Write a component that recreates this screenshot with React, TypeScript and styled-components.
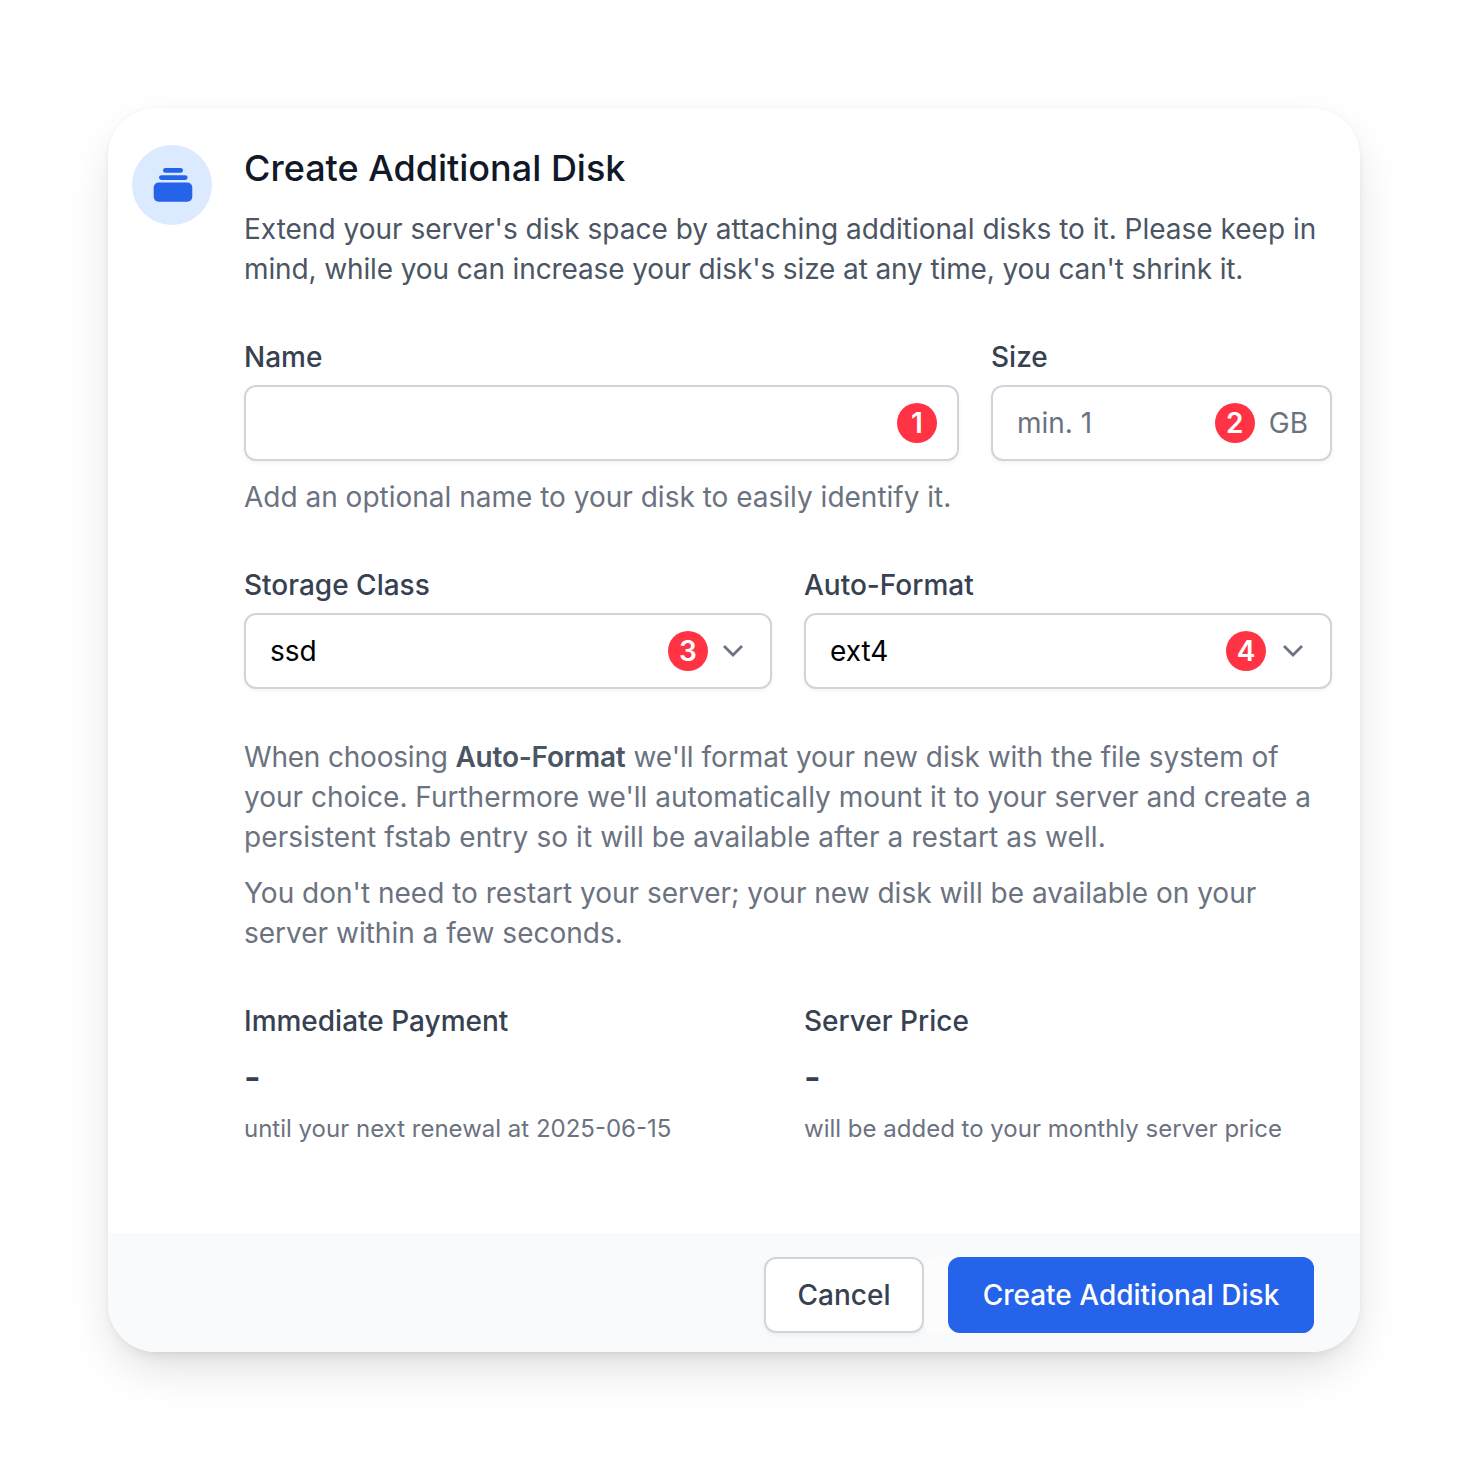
import styled, { createGlobalStyle } from 'styled-components';

const GlobalStyle = createGlobalStyle`
  html, body {
    margin: 0;
    padding: 0;
    background: #ffffff;
  }

  body {
    font-family: 'Inter', sans-serif;
    -webkit-font-smoothing: antialiased;
  }
`;

const Page = styled.div`
  width: 1468px;
  height: 1460px;
  padding: 108px;
  box-sizing: border-box;
`;

const Card = styled.div`
  width: 1252px;
  height: 1244px;
  display: flex;
  flex-direction: column;
  border-radius: 48px;
  overflow: hidden;
  background: #ffffff;
  box-shadow: 0 20px 50px -10px rgba(0, 0, 0, 0.16), 0 8px 16px -8px rgba(0, 0, 0, 0.1),
    0 0 4px rgba(0, 0, 0, 0.04);
`;

const Body = styled.div`
  flex: 1;
  display: flex;
  gap: 32px;
  padding: 37px 28px 0 24px;
`;

const IconCircle = styled.div`
  width: 80px;
  height: 80px;
  flex: none;
  display: flex;
  align-items: center;
  justify-content: center;
  border-radius: 50%;
  background: #dbeafe;
`;

const Content = styled.div`
  flex: 1;
  min-width: 0;
`;

const Title = styled.h2`
  margin: -1px 0 0;
  font-size: 36px;
  line-height: 48px;
  font-weight: 500;
  color: #111827;
`;

const Lead = styled.p`
  margin: 17px 0 0;
  font-size: 28px;
  line-height: 40px;
  color: #4b5563;
`;

const Tracked = styled.span<{ $spacing: number }>`
  letter-spacing: ${(p) => p.$spacing}px;
`;

const Row = styled.div<{ $columns: string; $top: number }>`
  display: grid;
  grid-template-columns: ${(p) => p.$columns};
  column-gap: 32px;
  margin-top: ${(p) => p.$top}px;
`;

const Label = styled.div`
  font-size: 28px;
  line-height: 40px;
  font-weight: 500;
  color: #374151;
`;

const Field = styled.div`
  height: 76px;
  margin-top: 8px;
  box-sizing: border-box;
  display: flex;
  align-items: center;
  padding: 0 24px;
  background: #ffffff;
  border: 2px solid #d1d5db;
  border-radius: 12px;
  box-shadow: 0 2px 4px rgba(0, 0, 0, 0.05);
  font-size: 28px;
`;

const FieldText = styled.span<{ $muted?: boolean }>`
  flex: 1;
  color: ${(p) => (p.$muted ? '#6b7280' : '#000000')};
`;

const Unit = styled.span`
  margin-left: 14px;
  margin-right: -2px;
  color: #6b7280;
`;

const Chevron = styled.svg<{ $gap: number }>`
  margin-left: ${(p) => p.$gap}px;
  margin-right: 1px;
  flex: none;
`;

const Badge = styled.span`
  width: 40px;
  height: 40px;
  flex: none;
  display: flex;
  align-items: center;
  justify-content: center;
  border-radius: 50%;
  background: #ff3344;
  color: #ffffff;
  font-size: 28px;
  font-weight: 600;
`;

const NameBadge = styled(Badge)`
  margin-right: -4px;
`;

const Hint = styled.p`
  margin: 16px 0 0;
  font-size: 28px;
  line-height: 40px;
  color: #6b7280;
`;

const Notes = styled.div`
  margin-top: 48px;
`;

const Note = styled.p`
  margin: 16px 0 0;
  font-size: 28px;
  line-height: 40px;
  color: #6b7280;

  &:first-child {
    margin-top: 0;
  }

  strong {
    font-weight: 600;
    color: #4b5563;
  }
`;

const Price = styled.div`
  margin-top: 16px;
  font-size: 36px;
  line-height: 40px;
  font-weight: 600;
  color: #374151;
`;

const Small = styled.div`
  margin-top: 12px;
  font-size: 24px;
  line-height: 40px;
  color: #6b7280;
`;

const Footer = styled.div`
  height: 119px;
  flex: none;
  box-sizing: border-box;
  display: flex;
  justify-content: flex-end;
  gap: 24px;
  padding: 24px 46px 0 0;
  background: #f9fafb;
`;

const CancelButton = styled.button`
  width: 160px;
  height: 76px;
  box-sizing: border-box;
  padding: 0;
  background: #ffffff;
  border: 2px solid #d1d5db;
  border-radius: 12px;
  box-shadow: 0 2px 4px rgba(0, 0, 0, 0.05);
  font-family: inherit;
  font-size: 28px;
  font-weight: 500;
  color: #374151;
`;

const SubmitButton = styled.button`
  position: relative;
  width: 366px;
  height: 76px;
  padding: 0;
  background: #2563eb;
  border: 0;
  border-radius: 12px;
  font-family: inherit;
  font-size: 28px;
  font-weight: 500;
  color: #ffffff;

  &::before {
    content: '';
    position: absolute;
    z-index: 0;
    left: -24px;
    top: 0;
    bottom: -1px;
    width: 60px;
    border-radius: 12px;
    background: #fcfcfd;
  }
`;

const SubmitFill = styled.span`
  position: absolute;
  inset: 0;
  display: flex;
  align-items: center;
  justify-content: center;
  border-radius: 12px;
  background: #2563eb;
`;

function DiskIcon() {
  return (
    <svg width="42" height="34" viewBox="0 0 42 34" fill="#2563eb">
      <rect x="12" y="0" width="20" height="4.8" rx="2.4" />
      <rect x="8" y="7.2" width="28.6" height="4.8" rx="2.4" />
      <rect x="2.7" y="14.6" width="38.6" height="19.2" rx="5" />
    </svg>
  );
}

function SelectChevron({ gap }: { gap: number }) {
  return (
    <Chevron $gap={gap} width="24" height="24" viewBox="0 0 24 24" fill="none">
      <path d="M3 7l9 9 9-9" stroke="#6b7280" strokeWidth="2.8" />
    </Chevron>
  );
}

export default function App() {
  return (
    <Page>
      <GlobalStyle />
      <Card>
        <Body>
          <IconCircle>
            <DiskIcon />
          </IconCircle>
          <Content>
            <Title>Create Additional Disk</Title>
            <Lead>
              Extend your server's disk space by attaching additional disks to it. Please keep in{' '}
              <Tracked $spacing={-0.12}>
                mind, while you can increase your disk's size at any time, you can't shrink it.
              </Tracked>
            </Lead>

            <Row $columns="715px 341px" $top={48}>
              <div>
                <Label>Name</Label>
                <Field>
                  <FieldText />
                  <NameBadge>1</NameBadge>
                </Field>
              </div>
              <div>
                <Label>Size</Label>
                <Field>
                  <FieldText $muted>min. 1</FieldText>
                  <Badge>2</Badge>
                  <Unit>GB</Unit>
                </Field>
              </div>
            </Row>
            <Hint>Add an optional name to your disk to easily identify it.</Hint>

            <Row $columns="528px 528px" $top={48}>
              <div>
                <Label>Storage Class</Label>
                <Field>
                  <FieldText>ssd</FieldText>
                  <Badge>3</Badge>
                  <SelectChevron gap={13} />
                </Field>
              </div>
              <div>
                <Label>Auto-Format</Label>
                <Field>
                  <FieldText>ext4</FieldText>
                  <Badge>4</Badge>
                  <SelectChevron gap={15} />
                </Field>
              </div>
            </Row>

            <Notes>
              <Note>
                <Tracked $spacing={-0.2}>
                  When choosing <strong>Auto-Format</strong>
                </Tracked>{' '}
                <Tracked $spacing={-0.02}>we'll format your new disk with the file system of</Tracked>{' '}
                your choice. Furthermore we'll automatically mount it to your server and create a{' '}
                <Tracked $spacing={0.09}>
                  persistent fstab entry so it will be available after a restart as well.
                </Tracked>
              </Note>
              <Note>
                You don't need to restart your server; your new disk will be available on your
                server within a few seconds.
              </Note>
            </Notes>

            <Row $columns="528px 528px" $top={48}>
              <div>
                <Label>Immediate Payment</Label>
                <Price>-</Price>
                <Small>until your next renewal at 2025-06-15</Small>
              </div>
              <div>
                <Label>Server Price</Label>
                <Price>-</Price>
                <Small>will be added to your monthly server price</Small>
              </div>
            </Row>
          </Content>
        </Body>
        <Footer>
          <CancelButton>Cancel</CancelButton>
          <SubmitButton>
            <SubmitFill>Create Additional Disk</SubmitFill>
          </SubmitButton>
        </Footer>
      </Card>
    </Page>
  );
}
